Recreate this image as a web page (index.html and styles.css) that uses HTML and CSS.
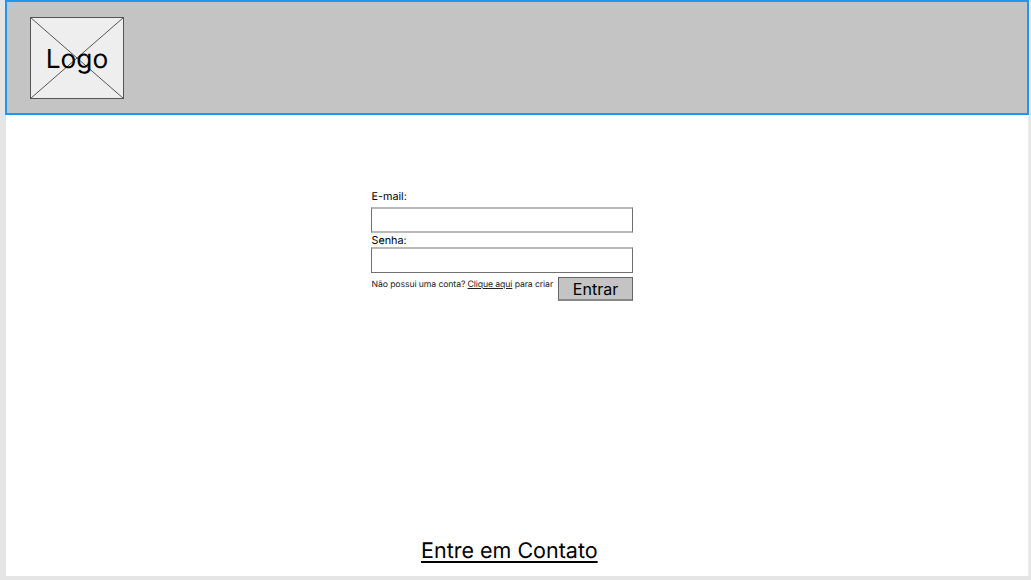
FILE: index.html
```html
<!DOCTYPE html>
<html lang="pt-BR">
<head>
<meta charset="utf-8">
<title>Login</title>
<link rel="stylesheet" href="styles.css">
</head>
<body>
<div class="frame">
  <header class="header">
    <div class="logo">
      <svg class="logo-cross" viewBox="0 0 94 82"><rect x=".5" y=".5" width="93" height="81"/><path d="M.5 .5 93.5 81.5M93.5 .5 .5 81.5"/></svg>
      <span class="logo-text">Logo</span>
    </div>
  </header>
  <main class="main">
    <form class="login">
      <label class="label label-email" for="email">E-mail:</label>
      <input class="field field-email" id="email" type="email">
      <label class="label label-password" for="password">Senha:</label>
      <input class="field field-password" id="password" type="password">
      <div class="actions">
        <p class="signup">Não possui uma conta? <a class="link" href="#">Clique aqui</a> para criar</p>
        <button class="submit" type="button">Entrar</button>
      </div>
    </form>
  </main>
  <footer class="footer"><a class="contact" href="#">Entre em Contato</a></footer>
</div>
</body>
</html>
```

FILE: styles.css
```css
* { box-sizing: border-box; }
body { margin: 0; height: 580px; overflow: hidden; background: #e5e5e5; color: #000; font-family: Inter, sans-serif; text-rendering: geometricPrecision; }
.frame { display: flex; flex-direction: column; width: 1024px; height: 576px; margin-left: 5px; background: #fff; border-left: 1px solid #e5e5e5; border-right: 1px solid #eee; }
.header { flex: none; height: 115px; margin: 0 -1px; padding: 15px 0 0 23px; border: 2px solid #1e96f3; background: #c4c4c4; }
.logo { display: grid; width: 94px; height: 82px; background: #eee; }
.logo-cross, .logo-text { grid-area: 1 / 1; }
.logo-cross { width: 94px; height: 82px; fill: none; stroke: #555; stroke-width: 1; }
.logo-text { place-self: center; padding-top: 3px; font-size: 26.3px; line-height: 32px; }
.main { flex: 1; padding: 74px 0 0 365px; }
.login { display: flex; flex-direction: column; width: 262px; }
.label { padding-left: .5px; font-size: 10.8px; line-height: 15px; }
.label-email { height: 18px; }
.label-password { height: 14px; }
.field { width: 262px; height: 26px; padding: 0 6px; border: 1px solid #707070; background: #fff; font: 11px Inter, sans-serif; }
.field-email { border-top: 2px solid #b9b9b9; border-bottom: 2px solid #b9b9b9; }
.field-password { border-top: 2px solid #b9b9b9; }
.actions { display: flex; justify-content: space-between; padding-top: 4px; }
.signup { margin: 0; padding: 2px 0 0 .5px; color: #222; font-size: 8.7px; line-height: 12px; letter-spacing: -.11px; white-space: nowrap; }
.link { color: inherit; text-underline-offset: 1px; }
.contact { color: inherit; text-decoration-thickness: 1.5px; text-underline-offset: 3px; }
.submit { width: 75px; height: 24px; padding: 0; border: 1px solid #666; border-bottom: 2px solid #888; background: #c4c4c4; color: #000; font: 16px/20px Inter, sans-serif; }
.footer { flex: none; height: 39px; padding-left: 415px; font-size: 21.5px; line-height: 28px; }
```
